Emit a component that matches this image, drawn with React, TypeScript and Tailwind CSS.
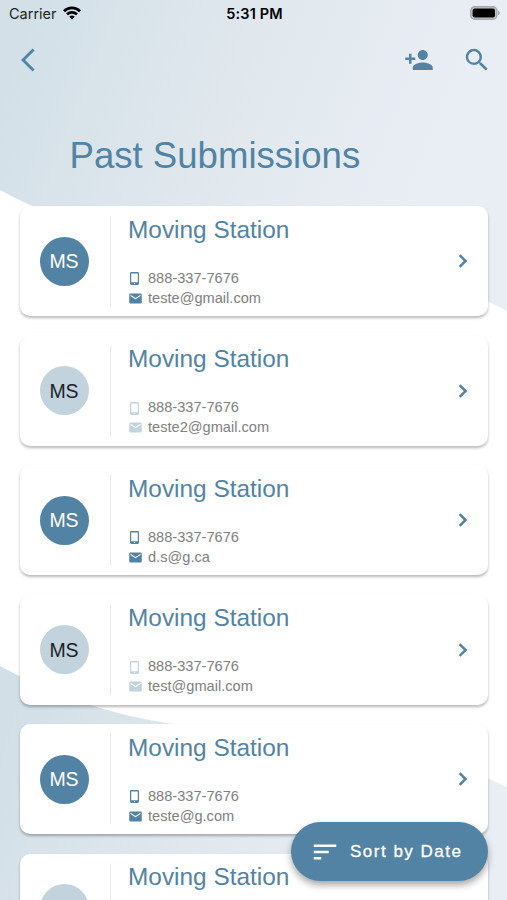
import { MdArrowBackIos, MdEmail, MdPersonAdd, MdSearch, MdSort } from "react-icons/md";

type Submission = {
  id: number;
  name: string;
  initials: string;
  phone: string;
  email: string;
  active: boolean;
};

const submissions: Submission[] = [
  { id: 1, name: "Moving Station", initials: "MS", phone: "888-337-7676", email: "teste@gmail.com", active: true },
  { id: 2, name: "Moving Station", initials: "MS", phone: "888-337-7676", email: "teste2@gmail.com", active: false },
  { id: 3, name: "Moving Station", initials: "MS", phone: "888-337-7676", email: "d.s@g.ca", active: true },
  { id: 4, name: "Moving Station", initials: "MS", phone: "888-337-7676", email: "test@gmail.com", active: false },
  { id: 5, name: "Moving Station", initials: "MS", phone: "888-337-7676", email: "teste@g.com", active: true },
  { id: 6, name: "Moving Station", initials: "MS", phone: "888-337-7676", email: "test@g.com", active: false },
];

function Background() {
  return (
    <svg className="absolute inset-0 -z-10" width="507" height="900" viewBox="0 0 507 900">
      <defs>
        <linearGradient id="top" gradientUnits="userSpaceOnUse" x1="0" y1="90" x2="400" y2="250">
          <stop offset="0" stopColor="#d3e0e8" />
          <stop offset="0.5" stopColor="#e0e8ed" />
          <stop offset="1" stopColor="#e9eef5" />
        </linearGradient>
        <linearGradient id="bottom" gradientUnits="userSpaceOnUse" x1="0" y1="730" x2="400" y2="890">
          <stop offset="0" stopColor="#d2dfe7" />
          <stop offset="0.5" stopColor="#e0e8ed" />
          <stop offset="1" stopColor="#e9eef4" />
        </linearGradient>
      </defs>
      <path d="M0 0H507V311C400 255 330 258 230 250C130 242 60 223 0 190Z" fill="url(#top)" />
      <path d="M0 666C42 689 95 712 172 724C300 738 400 735 507 787V900H0Z" fill="url(#bottom)" />
    </svg>
  );
}

function StatusBar() {
  return (
    <div className="grid h-7 grid-cols-3 items-center pr-[7px] pl-[9px] font-[Inter,sans-serif] text-[14.5px] text-[#222]">
      <div className="flex items-center gap-[6px]">
        <span>Carrier</span>
        <svg className="-mt-[2px]" width="18" height="14" viewBox="0 0 18 14" fill="none" stroke="#000" strokeWidth="2.7">
          <path d="M1 5.2A11.5 11.5 0 0 1 17 5.2" />
          <path d="M4 8.4A7.2 7.2 0 0 1 14 8.4" />
          <path d="M9 13.6L6.2 10.8A4 4 0 0 1 11.8 10.8Z" fill="#000" stroke="none" />
        </svg>
      </div>
      <span className="text-center font-semibold tracking-[0.15px] whitespace-nowrap text-black">5:31 PM</span>
      <svg className="-mt-[2px] justify-self-end" width="30" height="14" viewBox="0 0 30 14">
        <rect x="0.8" y="0.8" width="26" height="12.4" rx="3.8" fill="#c3c6c8" stroke="#a5a8aa" strokeWidth="1.4" />
        <rect x="2.6" y="2.4" width="22.4" height="9.2" rx="2" fill="#000" />
        <path d="M28 4.8C30.4 5.6 30.4 8.4 28 9.2Z" fill="#a5a8aa" />
      </svg>
    </div>
  );
}

function PhoneIcon() {
  return (
    <svg width="15" height="15" viewBox="0 0 15 15" fill="currentColor">
      <path
        fillRule="evenodd"
        d="M3.4 1h6.2c.8 0 1.4.6 1.4 1.4v10.2c0 .8-.6 1.4-1.4 1.4H3.4C2.6 14 2 13.4 2 12.6V2.4C2 1.6 2.6 1 3.4 1ZM3.2 2.6v8.6h6.6V2.6ZM6.5 12a.6.6 0 1 0 0 1.2.6.6 0 0 0 0-1.2Z"
      />
    </svg>
  );
}

function SubmissionCard({ item }: { item: Submission }) {
  return (
    <li className="flex h-[110px] shrink-0 items-center rounded-[10px] bg-white shadow-[0_2px_3px_rgba(0,0,0,0.28)]">
      <div
        className={`ml-[19.5px] flex size-[49px] items-center justify-center rounded-full pt-0.5 text-[19.5px] ${
          item.active ? "bg-[#5283a4] text-white" : "bg-[#c2d3de] text-[#1b2328]"
        }`}
      >
        {item.initials}
      </div>
      <div className="ml-[21.5px] h-[90px] w-px bg-[#e6e6e6]" />
      <div className="ml-[17px] flex-1 pt-px">
        <h2 className="text-[24.4px] leading-7 text-[#5283a4]">{item.name}</h2>
        <div className={`mt-[26px] space-y-0.5 text-[14.6px] leading-[17.7px] ${item.active ? "text-[#5283a4]" : "text-[#c2d3de]"}`}>
          <p className="flex items-center gap-[5px]">
            <PhoneIcon />
            <span className="text-[#808080]">{item.phone}</span>
          </p>
          <p className="flex items-center gap-[5px]">
            <MdEmail size={15} />
            <span className="text-[#808080]">{item.email}</span>
          </p>
        </div>
      </div>
      <svg className="mr-5" width="10" height="14" viewBox="0 0 10 14" fill="none" stroke="#5283a4" strokeWidth="2.5">
        <path d="M1.6 1.2L7.6 7L1.6 12.8" />
      </svg>
    </li>
  );
}

export default function App() {
  return (
    <div className="relative isolate h-[900px] w-[507px] overflow-hidden bg-white font-['Liberation_Sans',Arial,sans-serif]">
      <Background />
      <StatusBar />

      <header className="flex h-[63px] items-center pr-[15px] pl-[21px] text-[#5283a4]">
        <MdArrowBackIos size={28} />
        <div className="ml-auto flex items-center gap-7">
          <MdPersonAdd size={30} />
          <MdSearch size={30} />
        </div>
      </header>

      <h1 className="mt-[43px] ml-[69.5px] text-[36.6px] leading-[44px] text-[#5283a4]">Past Submissions</h1>

      <ul className="mt-[28px] mr-[19px] ml-5 flex flex-col gap-[19.5px]">
        {submissions.map((item) => (
          <SubmissionCard key={item.id} item={item} />
        ))}
      </ul>

      <button className="absolute top-[822px] left-[290.5px] flex h-[59px] w-[197.5px] items-center rounded-full bg-[#5283a4] pl-[19px] text-white shadow-[0_4px_7px_rgba(0,0,0,0.35)]">
        <MdSort size={30} />
        <span className="ml-[10.5px] text-[17px] tracking-[1.5px] whitespace-nowrap [-webkit-text-stroke:0.3px_white]">
          Sort by Date
        </span>
      </button>
    </div>
  );
}
